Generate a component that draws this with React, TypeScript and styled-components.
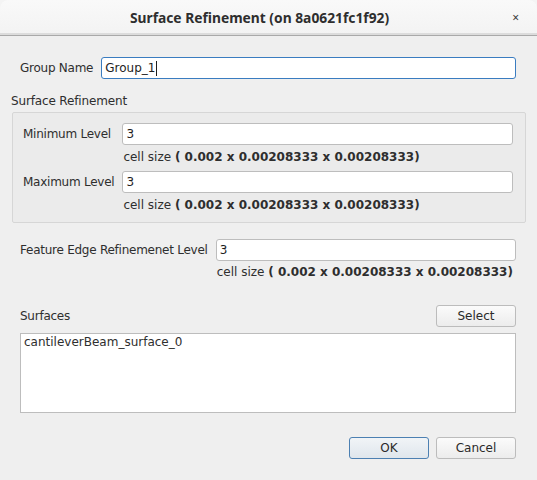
import React from "react";
import styled, { createGlobalStyle } from "styled-components";

const Global = createGlobalStyle`
  html, body { margin: 0; padding: 0; background: #f4f4f4; }
  body { font-family: "DejaVu Sans", "Noto Sans", sans-serif; font-size: 12px; color: #2e2e2e; }
  * { box-sizing: border-box; }
`;

const Window = styled.div`
  width: 537px;
  height: 480px;
  background: #efefef;
  display: flex;
  flex-direction: column;
  border-radius: 8px 8px 0 0;
  overflow: hidden;
`;

const TitleBar = styled.div`
  height: 36px;
  flex: none;
  display: grid;
  grid-template-columns: 1fr auto 1fr;
  align-items: center;
  background: linear-gradient(#f9f9f9, #f3f3f3);
  border-bottom: 1px solid #a9a9a9;
  box-shadow: inset 0 -2px 0 #dcdcdc;
  padding: 0 18px 0 0;
`;

const Title = styled.div`
  grid-column: 2;
  font-family: "Noto Sans", sans-serif;
  font-weight: bold;
  font-size: 13.8px;
  color: #2e2e2e;
`;

const Close = styled.div`
  grid-column: 3;
  justify-self: end;
  font-family: "Noto Sans", sans-serif;
  font-size: 12px;
  color: #3a3a3a;
  line-height: 1;
`;

const Body = styled.div`
  display: flex;
  flex-direction: column;
  padding: 21px 21px 0 20px;
`;

const FormRow = styled.div`
  display: grid;
  grid-template-columns: auto 1fr;
  column-gap: 8px;
  align-items: center;
`;

const Label = styled.div`
  line-height: 15px;
  white-space: nowrap;
  letter-spacing: -0.25px;
`;

const Field = styled.div<{ $focused?: boolean }>`
  height: 22px;
  background: #ffffff;
  border: 1px solid ${(p) => (p.$focused ? "#3a7cc0" : "#bdbdbd")};
  border-radius: 3px;
  padding: 0 3px;
  display: flex;
  align-items: center;
  line-height: 15px;
  color: #1e1e1e;
`;

const Caret = styled.span`
  display: inline-block;
  width: 1px;
  height: 15px;
  background: #1e1e1e;
  margin-left: 1px;
`;

const SectionHeading = styled.div`
  margin: 15px 0 0 -9px;
  line-height: 15px;
  letter-spacing: -0.15px;
`;

const GroupBox = styled.div`
  margin: 3px -10px 0 -8px;
  border: 1px solid #d6d6d6;
  border-radius: 2px;
  background: #ebebeb;
  padding: 10px 12px 9px 10px;
  display: grid;
  grid-template-columns: auto 1fr;
  column-gap: 8px;
  align-items: center;
`;

const CellSize = styled.div<{ $top: number; $bottom: number }>`
  grid-column: 2;
  line-height: 15px;
  padding-left: 1px;
  margin-top: ${(p) => p.$top}px;
  margin-bottom: ${(p) => p.$bottom}px;
  white-space: nowrap;
  b { font-weight: bold; }
`;

const FeatureRow = styled(FormRow)`
  margin-top: 16px;
`;

const SurfacesRow = styled.div`
  margin-top: 25px;
  display: flex;
  justify-content: space-between;
  align-items: center;
`;

const Button = styled.button<{ $default?: boolean }>`
  width: 80px;
  height: 22px;
  font-family: inherit;
  font-size: 12px;
  color: #2a2a2a;
  border-radius: 3px;
  border: 1px solid ${(p) => (p.$default ? "#4c80b2" : "#bcbcbc")};
  background: ${(p) =>
    p.$default
      ? "linear-gradient(#f1f4f7, #dfe6ec)"
      : "linear-gradient(#fbfbfb, #ececec)"};
  padding: 0;
  line-height: 15px;
`;

const ListBox = styled.div`
  margin-top: 6px;
  height: 80px;
  background: #ffffff;
  border: 1px solid #bdbdbd;
  padding: 1px 3px;
  line-height: 15px;
`;

const ButtonBar = styled.div`
  margin-top: 24px;
  display: flex;
  justify-content: flex-end;
  gap: 7px;
`;

const cell = (
  <>
    cell size <b>( 0.002 x 0.00208333 x 0.00208333)</b>
  </>
);

export default function App() {
  return (
    <>
      <Global />
      <Window>
        <TitleBar>
          <Title>Surface Refinement (on 8a0621fc1f92)</Title>
          <Close>×</Close>
        </TitleBar>
        <Body>
          <FormRow>
            <Label>Group Name</Label>
            <Field $focused>
              Group_1
              <Caret />
            </Field>
          </FormRow>

          <SectionHeading>Surface Refinement</SectionHeading>
          <GroupBox>
            <Label>Minimum Level</Label>
            <Field>3</Field>
            <CellSize $top={5} $bottom={6}>{cell}</CellSize>
            <Label>Maximum Level</Label>
            <Field>3</Field>
            <CellSize $top={5} $bottom={0}>{cell}</CellSize>
          </GroupBox>

          <FeatureRow>
            <Label>Feature Edge Refinemenet Level</Label>
            <Field>3</Field>
            <CellSize $top={4} $bottom={0}>{cell}</CellSize>
          </FeatureRow>

          <SurfacesRow>
            <Label>Surfaces</Label>
            <Button>Select</Button>
          </SurfacesRow>
          <ListBox>cantileverBeam_surface_0</ListBox>

          <ButtonBar>
            <Button $default>OK</Button>
            <Button>Cancel</Button>
          </ButtonBar>
        </Body>
      </Window>
    </>
  );
}
